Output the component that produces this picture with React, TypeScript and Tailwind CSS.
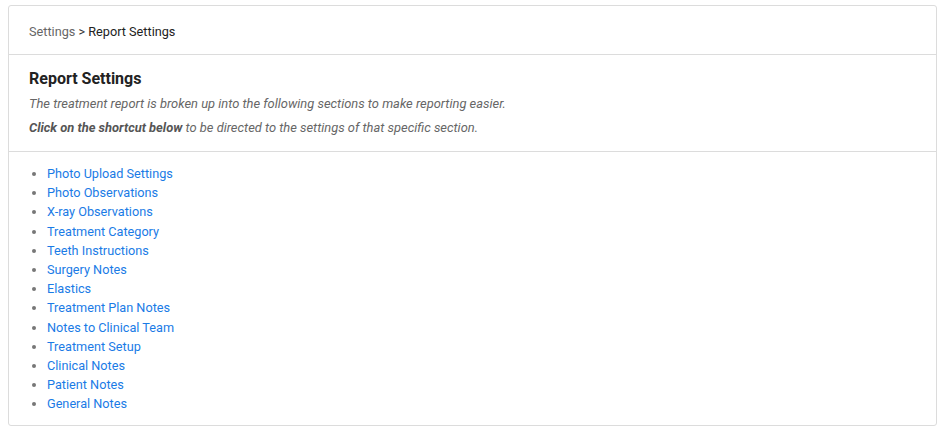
const sections = [
  "Photo Upload Settings",
  "Photo Observations",
  "X-ray Observations",
  "Treatment Category",
  "Teeth Instructions",
  "Surgery Notes",
  "Elastics",
  "Treatment Plan Notes",
  "Notes to Clinical Team",
  "Treatment Setup",
  "Clinical Notes",
  "Patient Notes",
  "General Notes",
];

export default function App() {
  return (
    <div className="min-h-screen bg-white px-2 pt-[5px] pb-[7px] font-['Roboto',sans-serif]">
      <div className="rounded-[3px] border border-[#dcdcdc] bg-white">
        {/* Breadcrumb */}
        <div className="border-b border-[#dcdcdc] px-5 pt-[17px] pb-[14px] text-[12.7px] leading-[17px]">
          <span className="text-[#666]">Settings</span>
          <span className="text-[#333]"> &gt; </span>
          <span className="text-[#222]">Report Settings</span>
        </div>

        {/* Intro */}
        <div className="border-b border-[#dcdcdc] px-5 pt-[14px] pb-[14px]">
          <h2 className="text-[16px] leading-5 font-bold text-[#222]">Report Settings</h2>
          <p className="mt-[6px] text-[12.9px] leading-[18px] italic text-[#666]">
            The treatment report is broken up into the following sections to make reporting easier.
          </p>
          <p className="mt-[6px] text-[12.9px] leading-[18px] italic text-[#666]">
            <span className="font-bold text-[#555]">Click on the shortcut below</span> to be directed to the settings of that specific section.
          </p>
        </div>

        {/* Shortcuts */}
        <ul className="list-disc px-5 pt-3 pb-[11px] pl-[38px] text-[12.7px] leading-[19.2px] marker:text-[#777]">
          {sections.map((s) => (
            <li key={s}>
              <a href="#" className="text-[#1a7be6] hover:underline">
                {s}
              </a>
            </li>
          ))}
        </ul>
      </div>
    </div>
  );
}
